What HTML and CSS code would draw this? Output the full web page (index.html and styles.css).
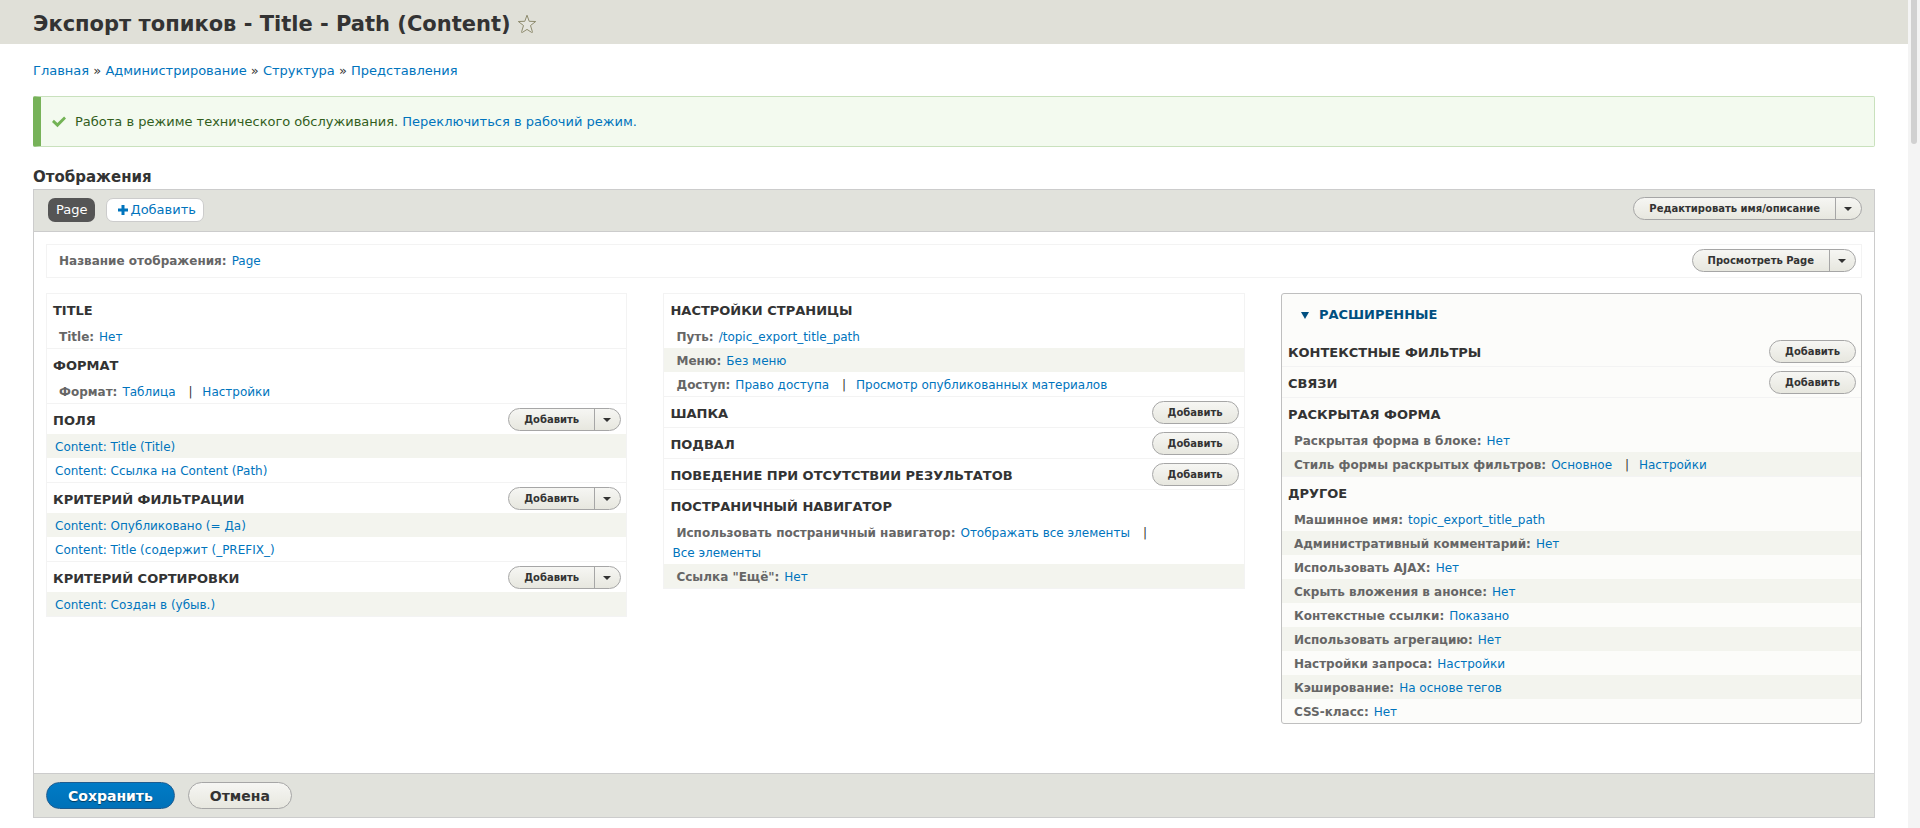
FILE: index.html
```html
<!DOCTYPE html>
<html lang="ru">
<head>
<meta charset="utf-8">
<title>Экспорт топиков - Title - Path (Content)</title>
<link rel="stylesheet" href="styles.css">
</head>
<body>
<div class="page">
  <header class="page-header">
    <h1 class="page-title">Экспорт топиков - Title - Path (Content)</h1>
    <button class="star" type="button" aria-label="Добавить в избранное">
      <svg width="20" height="20" viewBox="0 0 20 20"><path d="M10 1.200L12.200 7.300 18.700 7.500 13.500 11.500 15.400 17.800Q15.600 18.900 14.600 18.400L10 15.400 5.400 18.400Q4.400 18.900 4.600 17.800L6.500 11.500 1.300 7.500 7.800 7.300z" fill="#e5e5de" stroke="#8e8b6e" stroke-width="1" stroke-linejoin="round"/></svg>
    </button>
  </header>

  <main class="content">
    <nav class="breadcrumb">
      <a href="#">Главная</a> » <a href="#">Администрирование</a> » <a href="#">Структура</a> » <a href="#">Представления</a>
    </nav>

    <div class="message">
      <svg class="message-icon" width="16" height="16" viewBox="0 0 16 16"><path d="M6.500 13.200L1 8l1.900-2.200 3.500 3.200L13.100 2.600 15 4.600z" fill="#73b355"/></svg>
      <p class="message-text">Работа в режиме технического обслуживания. <a href="#">Переключиться в рабочий режим.</a></p>
    </div>

    <h2 class="displays-title">Отображения</h2>

    <form class="views">
      <div class="displays-bar">
        <div class="tabs">
          <a class="tab tab-active" href="#">Page</a>
          <a class="tab tab-add" href="#"><svg width="10" height="10" viewBox="0 0 10 10"><path d="M3.500 0h3v3.500H10v3H6.500V10h-3V6.500H0v-3h3.500z" fill="#0074bd"/></svg>Добавить</a>
        </div>
        <div class="split"><button class="btn" type="button">Редактировать имя/описание</button><button class="toggle" type="button" aria-label="Список действий"></button></div>
      </div>

      <div class="views-body">
        <div class="display-name">
          <p class="name-text"><span class="label">Название отображения:</span><a href="#">Page</a></p>
          <div class="split"><button class="btn" type="button">Просмотреть Page</button><button class="toggle" type="button" aria-label="Список действий"></button></div>
        </div>

        <div class="columns">
          <div class="column">
            <section class="bucket">
              <div class="bucket-head"><h3>Title</h3></div>
              <div class="row"><span class="label">Title:</span><a href="#">Нет</a></div>
            </section>
            <section class="bucket">
              <div class="bucket-head"><h3>Формат</h3></div>
              <div class="row"><span class="label">Формат:</span><a href="#">Таблица</a><span class="sep">|</span> <a href="#">Настройки</a></div>
            </section>
            <section class="bucket">
              <div class="bucket-head"><h3>Поля</h3>
                <div class="split"><button class="btn" type="button">Добавить</button><button class="toggle" type="button" aria-label="Список действий"></button></div>
              </div>
              <div class="row odd"><a href="#">Content: Title (Title)</a></div>
              <div class="row"><a href="#">Content: Ссылка на Content (Path)</a></div>
            </section>
            <section class="bucket">
              <div class="bucket-head"><h3>Критерий фильтрации</h3>
                <div class="split"><button class="btn" type="button">Добавить</button><button class="toggle" type="button" aria-label="Список действий"></button></div>
              </div>
              <div class="row odd"><a href="#">Content: Опубликовано (= Да)</a></div>
              <div class="row"><a href="#">Content: Title (содержит (_PREFIX_)</a></div>
            </section>
            <section class="bucket">
              <div class="bucket-head"><h3>Критерий сортировки</h3>
                <div class="split"><button class="btn" type="button">Добавить</button><button class="toggle" type="button" aria-label="Список действий"></button></div>
              </div>
              <div class="row odd"><a href="#">Content: Создан в (убыв.)</a></div>
            </section>
          </div>

          <div class="column">
            <section class="bucket">
              <div class="bucket-head"><h3>Настройки страницы</h3></div>
              <div class="row"><span class="label">Путь:</span><a href="#">/topic_export_title_path</a></div>
              <div class="row odd"><span class="label">Меню:</span><a href="#">Без меню</a></div>
              <div class="row"><span class="label">Доступ:</span><a href="#">Право доступа</a><span class="sep">|</span> <a href="#">Просмотр опубликованных материалов</a></div>
            </section>
            <section class="bucket">
              <div class="bucket-head"><h3>Шапка</h3><div class="split"><button class="btn" type="button">Добавить</button></div></div>
            </section>
            <section class="bucket">
              <div class="bucket-head"><h3>Подвал</h3><div class="split"><button class="btn" type="button">Добавить</button></div></div>
            </section>
            <section class="bucket">
              <div class="bucket-head"><h3>Поведение при отсутствии результатов</h3><div class="split"><button class="btn" type="button">Добавить</button></div></div>
            </section>
            <section class="bucket">
              <div class="bucket-head"><h3>Постраничный навигатор</h3></div>
              <div class="row"><span class="label">Использовать постраничный навигатор:</span><a href="#">Отображать все элементы</a><span class="sep">|</span> <a href="#">Все элементы</a></div>
              <div class="row odd"><span class="label">Ссылка "Ещё":</span><a href="#">Нет</a></div>
            </section>
          </div>

          <details class="column advanced" open>
            <summary>Расширенные</summary>
            <section class="bucket">
              <div class="bucket-head"><h3>Контекстные фильтры</h3><div class="split"><button class="btn" type="button">Добавить</button></div></div>
            </section>
            <section class="bucket">
              <div class="bucket-head"><h3>Связи</h3><div class="split"><button class="btn" type="button">Добавить</button></div></div>
            </section>
            <section class="bucket">
              <div class="bucket-head"><h3>Раскрытая форма</h3></div>
              <div class="row"><span class="label">Раскрытая форма в блоке:</span><a href="#">Нет</a></div>
              <div class="row odd"><span class="label">Стиль формы раскрытых фильтров:</span><a href="#">Основное</a><span class="sep">|</span> <a href="#">Настройки</a></div>
            </section>
            <section class="bucket">
              <div class="bucket-head"><h3>Другое</h3></div>
              <div class="row"><span class="label">Машинное имя:</span><a href="#">topic_export_title_path</a></div>
              <div class="row odd"><span class="label">Административный комментарий:</span><a href="#">Нет</a></div>
              <div class="row"><span class="label">Использовать AJAX:</span><a href="#">Нет</a></div>
              <div class="row odd"><span class="label">Скрыть вложения в анонсе:</span><a href="#">Нет</a></div>
              <div class="row"><span class="label">Контекстные ссылки:</span><a href="#">Показано</a></div>
              <div class="row odd"><span class="label">Использовать агрегацию:</span><a href="#">Нет</a></div>
              <div class="row"><span class="label">Настройки запроса:</span><a href="#">Настройки</a></div>
              <div class="row odd"><span class="label">Кэширование:</span><a href="#">На основе тегов</a></div>
              <div class="row"><span class="label">CSS-класс:</span><a href="#">Нет</a></div>
            </section>
          </details>
        </div>
      </div>

      <div class="actions">
        <button class="action action-primary" type="submit">Сохранить</button>
        <button class="action" type="button">Отмена</button>
      </div>
    </form>
  </main>
</div>
<div class="scroll-track"><div class="scroll-thumb"></div></div>
</body>
</html>
```

FILE: styles.css
```css
* { box-sizing: border-box; }

body {
  margin: 0;
  display: flex;
  min-height: 100vh;
  background: #fff;
  color: #333;
  font: 13px/20px "DejaVu Sans", sans-serif;
}

h1, h2, h3, p { margin: 0; }
a { color: #0074bd; text-decoration: none; }
button { font-family: inherit; cursor: pointer; }

.page { flex: 1; min-width: 0; }

.page-header {
  display: flex;
  align-items: center;
  gap: 6px;
  padding: 10px 33px 6px;
  background: #e0e0d8;
}
.page-title { font-size: 21px; line-height: 28px; }
.star { display: flex; padding: 0; border: 0; background: none; }

.content { padding: 17px 33px 0; }
.breadcrumb { padding-bottom: 15px; line-height: 20px; }

.message {
  display: flex;
  align-items: center;
  gap: 8px;
  padding: 15px 18px 14px 10px;
  border: 1px solid #c9e1bd;
  border-left: 8px solid #77b259;
  border-radius: 2px;
  background: #f3faef;
  color: #325e1c;
}

.displays-title { padding: 20px 0 2px; font-size: 15px; line-height: 20px; }

.views { border: 1px solid #ccc; }

.displays-bar {
  display: flex;
  justify-content: space-between;
  align-items: flex-start;
  padding: 7px 12px 9px 14px;
  border-bottom: 1px solid #ccc;
  background: #e1e2dc;
}
.tabs { display: flex; gap: 11px; padding-top: 1px; }
.tab { border-radius: 7px; line-height: 24px; }
.tab-active { padding: 0 8px; background: #555; color: #fff; }
.tab-add {
  display: flex;
  align-items: center;
  gap: 2px;
  padding: 0 7px 0 11px;
  border: 1px solid #ccc;
  background: #fff;
  line-height: 22px;
}

.views-body { padding: 12px 12px 49px; }

.display-name {
  display: flex;
  justify-content: space-between;
  align-items: center;
  padding: 4px 5px 5px 8px;
  border: 1px solid #f3f3f3;
}
.name-text { font-size: 12px; }
.label { padding: 0 5px 0 4px; color: #666; font-weight: bold; }

.columns {
  display: grid;
  grid-template-columns: repeat(3, 1fr);
  column-gap: 2%;
  align-items: start;
  padding-top: 15px;
}
.column { border: 1px solid #f3f3f3; border-top: 0; min-width: 0; }

.bucket { border-top: 1px solid #f3f3f3; }
.bucket-head {
  display: flex;
  justify-content: space-between;
  align-items: flex-start;
  min-height: 30px;
  padding: 4px 5px 3px 6px;
}
.bucket-head h3 { padding-top: 3px; font-size: 13px; line-height: 20px; text-transform: uppercase; }

.row { padding: 3px 8px 1px; font-size: 12px; line-height: 20px; }
.row a { display: inline-block; }
.odd { background: #f3f4ee; }
.sep { padding: 0 6px 0 13px; }

.advanced { border: 1px solid #bfbfbf; border-radius: 3px; background: #fcfcfa; }
.advanced summary {
  display: flex;
  align-items: center;
  gap: 10px;
  padding: 11px 19px;
  color: #004f80;
  font-weight: bold;
  text-transform: uppercase;
  cursor: pointer;
}
.advanced summary::before {
  content: "";
  border: 4px solid transparent;
  border-top: 7px solid #004f80;
  border-bottom: 0;
}
.advanced summary + .bucket { border-top: 0; }

.split {
  display: flex;
  flex: none;
  height: 23px;
  overflow: hidden;
  border: 1px solid #a6a6a6;
  border-radius: 12px;
  background: linear-gradient(#f6f6f3, #e7e7df);
}
.btn {
  padding: 0 15px;
  border: 0;
  background: none;
  color: #333;
  font-size: 10px;
  font-weight: bold;
  line-height: 20px;
}
.toggle {
  display: flex;
  align-items: center;
  justify-content: center;
  width: 26px;
  padding: 0 2px 0 0;
  border: 0;
  border-left: 1px solid #a6a6a6;
  background: none;
}
.toggle::before {
  content: "";
  border: 4px solid transparent;
  border-top-color: #333;
  border-bottom: 0;
}

.actions {
  display: flex;
  gap: 13px;
  padding: 8px 12px;
  border-top: 1px solid #ccc;
  background: #e1e2dc;
}
.action {
  height: 27px;
  padding: 0 21px;
  border: 1px solid #a6a6a6;
  border-radius: 14px;
  background: linear-gradient(#f6f6f3, #e7e7df);
  color: #333;
  font-size: 14px;
  font-weight: bold;
}
.action-primary {
  border-color: #1e5c90;
  background: linear-gradient(#007bc6, #0071b8);
  color: #fff;
  text-shadow: 0 1px 1px rgba(0, 0, 0, 0.5);
}

.scroll-track { width: 12px; padding: 0 3px; background: #f4f4f4; }
.scroll-thumb { height: 144px; border-radius: 0 0 3px 3px; background: #d1d1d1; }
```
